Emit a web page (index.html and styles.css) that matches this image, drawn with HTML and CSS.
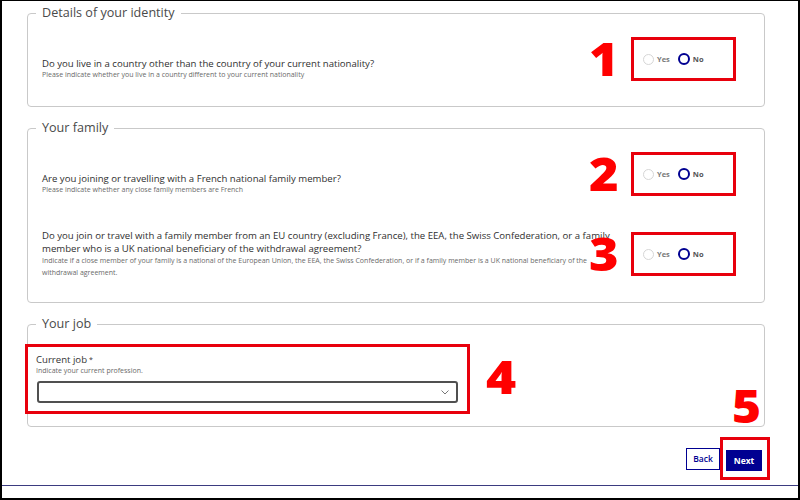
FILE: index.html
```html
<!DOCTYPE html>
<html lang="en">
<head>
<meta charset="utf-8">
<title>France-Visas – Your situation</title>
<link rel="stylesheet" href="styles.css">
</head>
<body>
<div class="frame">
  <main class="form">
    <fieldset class="group group-identity">
      <legend>Details of your identity</legend>
      <div class="row">
        <div class="q q-offset">
          <p class="q-label">Do you live in a country other than the country of your current nationality?</p>
          <p class="q-hint">Please indicate whether you live in a country different to your current nationality</p>
        </div>
        <div class="mark mark-radio">
          <span class="num num-left">1</span>
          <div class="radio"><span class="dot"></span>Yes</div>
          <div class="radio radio-on"><span class="dot dot-on"></span>No</div>
        </div>
      </div>
    </fieldset>

    <fieldset class="group group-family">
      <legend>Your family</legend>
      <div class="row">
        <div class="q q-offset">
          <p class="q-label">Are you joining or travelling with a French national family member?</p>
          <p class="q-hint">Please indicate whether any close family members are French</p>
        </div>
        <div class="mark mark-radio">
          <span class="num num-left">2</span>
          <div class="radio"><span class="dot"></span>Yes</div>
          <div class="radio radio-on"><span class="dot dot-on"></span>No</div>
        </div>
      </div>
      <div class="row row-second">
        <div class="q q-wide">
          <p class="q-label">Do you join or travel with a family member from an EU country (excluding France), the EEA, the Swiss Confederation, or a family member who is a UK national beneficiary of the withdrawal agreement?</p>
          <p class="q-hint">Indicate if a close member of your family is a national of the European Union, the EEA, the Swiss Confederation, or if a family member is a UK national beneficiary of the withdrawal agreement.</p>
        </div>
        <div class="mark mark-radio">
          <span class="num num-left">3</span>
          <div class="radio"><span class="dot"></span>Yes</div>
          <div class="radio radio-on"><span class="dot dot-on"></span>No</div>
        </div>
      </div>
    </fieldset>

    <fieldset class="group group-job">
      <legend>Your job</legend>
      <div class="mark mark-field">
        <span class="num num-right">4</span>
        <label class="f-label">Current job<span class="req">*</span></label>
        <p class="q-hint f-hint">Indicate your current profession.</p>
        <div class="select">
          <svg class="chev" width="8" height="5" viewBox="0 0 8 5"><path d="M0.5 0.5 L4 4 L7.5 0.5" fill="none" stroke="#777" stroke-width="1"/></svg>
        </div>
      </div>
    </fieldset>

    <div class="actions">
      <button class="btn btn-back" type="button">Back</button>
      <div class="mark mark-next">
        <span class="num num-top">5</span>
        <button class="btn btn-next" type="button">Next</button>
      </div>
    </div>
  </main>
  <div class="foot-line"></div>
</div>
</body>
</html>
```

FILE: styles.css
```css
* { box-sizing: border-box; }
html, body { margin: 0; padding: 0; background: #fff; }
body { font-family: "Open Sans", "Liberation Sans", sans-serif; color: #333; }

.frame {
  width: 800px;
  height: 500px;
  border-style: solid;
  border-color: #000;
  border-width: 1px 2px 2px 2px;
  overflow: hidden;
  background: #fff;
}

.form { padding-top: 3px; }

.group {
  margin: 0 33px 0 25px;
  padding: 0 28px 25px 14px;
  border: 1px solid #c9c9c9;
  border-radius: 4px;
  min-width: 0;
}
.group + .group { margin-top: 12px; }
.group-family { padding-bottom: 23px; }
.group-job { padding: 11px 28px 12px 0; }

legend {
  font-size: 12.6px;
  line-height: 18px;
  color: #4a4a4a;
  padding: 0 6px;
  margin-left: -6px;
}
.group-job legend { margin-left: 8px; }

.row {
  display: flex;
  align-items: center;
  justify-content: space-between;
  margin-top: 15px;
}
.row-second { margin-top: 33px; }

.q { flex: 0 0 575px; }
.q-offset { padding-top: 18px; }

.q-label {
  margin: 0;
  font-size: 9.6px;
  line-height: 13px;
  color: #2f2f2f;
}
.q-hint {
  margin: 0;
  font-size: 7px;
  line-height: 12px;
  color: #6a6a6a;
}
.q-offset .q-hint { line-height: 9px; }

.mark {
  position: relative;
  border: 3px solid #e8000c;
}
.mark-radio {
  width: 105px;
  height: 44px;
  display: flex;
  align-items: center;
  gap: 8px;
  padding-left: 9px;
}

.num {
  position: absolute;
  font-weight: 800;
  font-size: 46px;
  line-height: 1;
  color: #f00;
  font-family: "Open Sans", "Liberation Sans", sans-serif;
  transform-origin: left center;
}
.num-left { right: calc(100% + 18px); top: 50%; transform: translateY(-52%) scaleX(1.1); }
.num-right { left: calc(100% + 19px); top: 6px; transform: scaleX(1.12); }
.num-top { left: 9px; bottom: calc(100% + 12px); transform: scaleX(1.08); }

.radio {
  display: flex;
  align-items: center;
  gap: 3px;
  font-size: 7.5px;
  font-weight: 700;
  color: #7a7a7a;
}
.radio-on { color: #555; }
.dot {
  width: 11px;
  height: 11px;
  border-radius: 50%;
  border: 1px solid #d6d6d6;
}
.dot-on { width: 12px; height: 12px; border: 2.5px solid #000091; }

.mark-field {
  margin-left: -3px;
  width: 445px;
  padding: 6px 9px 8px 8px;
}
.f-label {
  display: block;
  font-size: 9.6px;
  line-height: 13px;
  color: #333;
}
.req { margin-left: 2px; font-size: 7px; vertical-align: top; }
.f-hint { line-height: 9px; }
.select {
  margin-top: 6px;
  margin-left: 1px;
  height: 22px;
  border: 2px solid #505050;
  border-radius: 3px;
  display: flex;
  align-items: center;
  justify-content: flex-end;
  padding-right: 7px;
}

.actions {
  display: flex;
  justify-content: flex-end;
  align-items: center;
  margin: 10px 28px 0 0;
}
.btn {
  font-family: "Open Sans", "Liberation Sans", sans-serif;
  font-size: 8.5px;
  font-weight: 600;
  height: 22px;
  border-radius: 0;
  cursor: pointer;
}
.btn-back {
  background: #fff;
  color: #000091;
  border: 1px solid #000091;
  padding: 0 6px;
  width: 34px;
}
.mark-next { padding: 7px 5px 6px 3px; }
.btn-next {
  background: #000091;
  color: #fff;
  border: 0;
  width: 36px;
  height: 21px;
  font-weight: 700;
  padding: 0;
}

.foot-line {
  margin-top: 5px;
  border-top: 1px solid #3b3b80;
}
```
